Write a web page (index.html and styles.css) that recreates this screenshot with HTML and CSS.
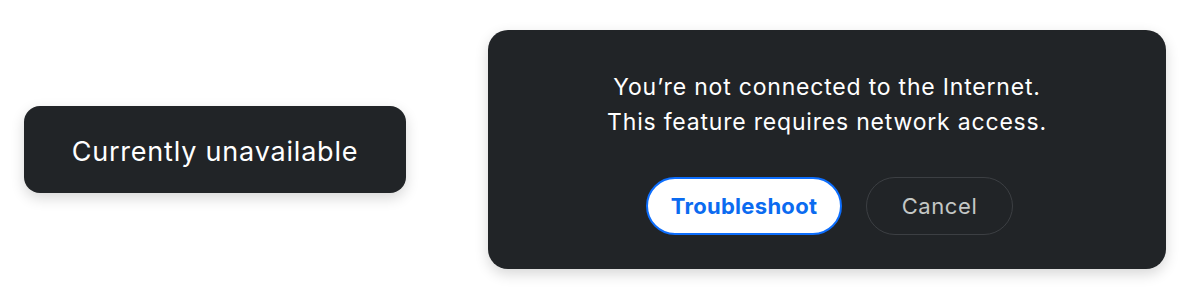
FILE: index.html
```html
<!DOCTYPE html>
<html>
<head>
<meta charset="utf-8">
<link rel="stylesheet" href="styles.css">
</head>
<body>
<div class="stage">
  <div class="toast">Currently unavailable</div>
  <div class="dialog">
    <p class="message">You’re not connected to the Internet.<br>This feature requires network access.</p>
    <div class="actions">
      <button class="btn btn-primary">Troubleshoot</button>
      <button class="btn btn-secondary">Cancel</button>
    </div>
  </div>
</div>
</body>
</html>
```
FILE: styles.css
```css
html, body {
  margin: 0;
  padding: 0;
  background: #ffffff;
}
.stage {
  height: 299px;
  display: flex;
  align-items: center;
  padding-left: 24px;
  gap: 82px;
  font-family: Inter, "Liberation Sans", sans-serif;
}
.toast {
  box-sizing: border-box;
  width: 382px;
  height: 87px;
  padding-top: 3px;
  background: #212427;
  border-radius: 16px;
  color: #ffffff;
  font-size: 27px;
  letter-spacing: 0.8px;
  display: flex;
  align-items: center;
  justify-content: center;
  box-shadow: 0 5px 14px rgba(0,0,0,0.16);
}
.dialog {
  box-sizing: border-box;
  width: 678px;
  height: 239px;
  background: #212427;
  border-radius: 20px;
  box-shadow: 0 5px 14px rgba(0,0,0,0.16);
  display: flex;
  flex-direction: column;
  align-items: center;
  padding-top: 40px;
}
.message {
  margin: 0;
  color: #ffffff;
  font-size: 23px;
  letter-spacing: 0.8px;
  line-height: 35px;
  text-align: center;
}
.actions {
  display: flex;
  gap: 24px;
  margin-top: 37px;
  margin-left: 5px;
}
.btn {
  box-sizing: border-box;
  height: 58px;
  border-radius: 29px;
  font-family: Inter, "Liberation Sans", sans-serif;
  font-size: 22px;
  letter-spacing: 0.3px;
  padding: 0;
}
.btn-primary {
  width: 196px;
  background: #ffffff;
  border: 2px solid #0d6efd;
  color: #0b6bf0;
  font-weight: 700;
}
.btn-secondary {
  width: 147px;
  background: transparent;
  border: 1px solid #3c3f43;
  color: #c4c7c5;
  letter-spacing: 0.6px;
}
```
